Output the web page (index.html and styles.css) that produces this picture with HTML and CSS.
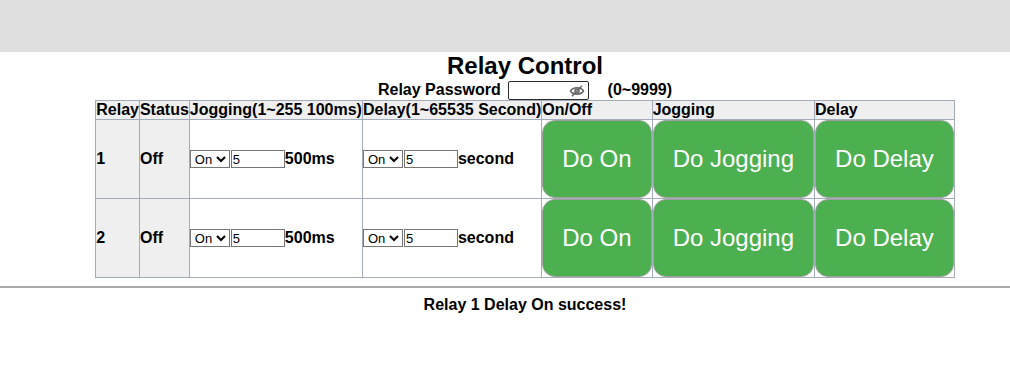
FILE: index.html
```html
<!DOCTYPE html>
<html>
<head>
<meta charset="utf-8">
<link rel="stylesheet" href="styles.css">
</head>
<body>
<div class="topbar"></div>
<div class="main">
  <h1 class="title">Relay Control</h1>
  <div class="pwline">
    <span>Relay Password</span>
    <span class="pwbox">
      <input class="pw" type="password">
      <svg class="eye" width="16" height="12" viewBox="0 0 16 12"><path d="M1.5 6 C4 1.8 12 1.8 14.5 6 C12 10.2 4 10.2 1.5 6 Z" fill="none" stroke="#666" stroke-width="1.5"/><circle cx="8" cy="6" r="2" fill="none" stroke="#666" stroke-width="1.5"/><path d="M13 0.8 L3 11.2" stroke="#666" stroke-width="1.5"/></svg>
    </span>
    <span class="range">(0~9999)</span>
  </div>
  <table class="relays">
    <tr class="head">
      <td>Relay</td><td>Status</td><td>Jogging(1~255 100ms)</td><td>Delay(1~65535 Second)</td><td>On/Off</td><td>Jogging</td><td>Delay</td>
    </tr>
    <tr>
      <td class="gray">1</td><td class="gray">Off</td>
      <td><select class="sel"><option>On</option></select><input class="num" type="text" value="5">500ms</td>
      <td><select class="sel"><option>On</option></select><input class="num" type="text" value="5">second</td>
      <td class="btncell"><button class="btn">Do On</button></td>
      <td class="btncell"><button class="btn">Do Jogging</button></td>
      <td class="btncell"><button class="btn">Do Delay</button></td>
    </tr>
    <tr>
      <td class="gray">2</td><td class="gray">Off</td>
      <td><select class="sel"><option>On</option></select><input class="num" type="text" value="5">500ms</td>
      <td><select class="sel"><option>On</option></select><input class="num" type="text" value="5">second</td>
      <td class="btncell"><button class="btn">Do On</button></td>
      <td class="btncell"><button class="btn">Do Jogging</button></td>
      <td class="btncell"><button class="btn">Do Delay</button></td>
    </tr>
  </table>
</div>
<hr class="rule">
<div class="main">
  <div class="msg">Relay 1 Delay On success!</div>
</div>
</body>
</html>
```

FILE: styles.css
```css
html, body {
  margin: 0;
  padding: 0;
  background: #fff;
}
body {
  font-family: "Liberation Sans", Arial, sans-serif;
  color: #000;
}
.topbar {
  height: 52px;
  background: #dfdfdf;
}
.main {
  margin-left: 40px;
  text-align: center;
}
.title {
  margin: 0;
  font-size: 24px;
  line-height: 28px;
  font-weight: bold;
}
.pwline {
  font-size: 16px;
  font-weight: bold;
  line-height: 20px;
  height: 20px;
}
.pwbox {
  position: relative;
  display: inline-block;
  vertical-align: top;
  margin-left: 3px;
}
.pw {
  box-sizing: border-box;
  width: 81px;
  height: 19px;
  margin: 1px 0 0 0;
  padding: 0 2px;
  border: 1px solid #2b2b2b;
  border-radius: 2px;
  display: block;
}
.eye {
  position: absolute;
  left: 61px;
  top: 5px;
}
.range {
  margin-left: 14px;
}
.relays {
  margin: 0 auto;
  border-collapse: collapse;
  font-size: 16px;
  font-weight: bold;
  text-align: left;
}
.relays td {
  border: 1px solid #a3acbb;
  padding: 0;
  line-height: 18px;
  vertical-align: middle;
  white-space: nowrap;
}
.head td {
  background: #efefef;
}
.relays td.gray {
  background: #efefef;
}
.sel {
  font-family: "Liberation Sans", Arial, sans-serif;
  font-size: 13px;
  height: 18px;
  width: 40px;
  padding: 0;
  border: 1px solid #767676;
  border-radius: 0;
  background: #fff;
  vertical-align: middle;
  margin: 0;
}
.num {
  box-sizing: border-box;
  font-family: "Liberation Sans", Arial, sans-serif;
  font-size: 13px;
  width: 54px;
  height: 18px;
  padding: 0 1px;
  margin: 0 0 0 1px;
  border: 1px solid #767676;
  vertical-align: middle;
}
.relays td.btncell {
  padding: 0;
}
.btn {
  display: block;
  box-sizing: border-box;
  width: 100%;
  margin: 0;
  padding: 24px 19px;
  height: 78px;
  background: #4caf50;
  color: #fff;
  font-family: "Liberation Sans", Arial, sans-serif;
  font-size: 24px;
  font-weight: normal;
  border: 1px solid #a0a0a0;
  border-radius: 13px;
  white-space: nowrap;
}
.rule {
  margin: 8px 0 0 0;
  border: 0;
  border-top: 2px solid #a9a9a9;
  height: 0;
}
.msg {
  margin-top: 8px;
  font-size: 16px;
  font-weight: bold;
  line-height: 18px;
}
```
